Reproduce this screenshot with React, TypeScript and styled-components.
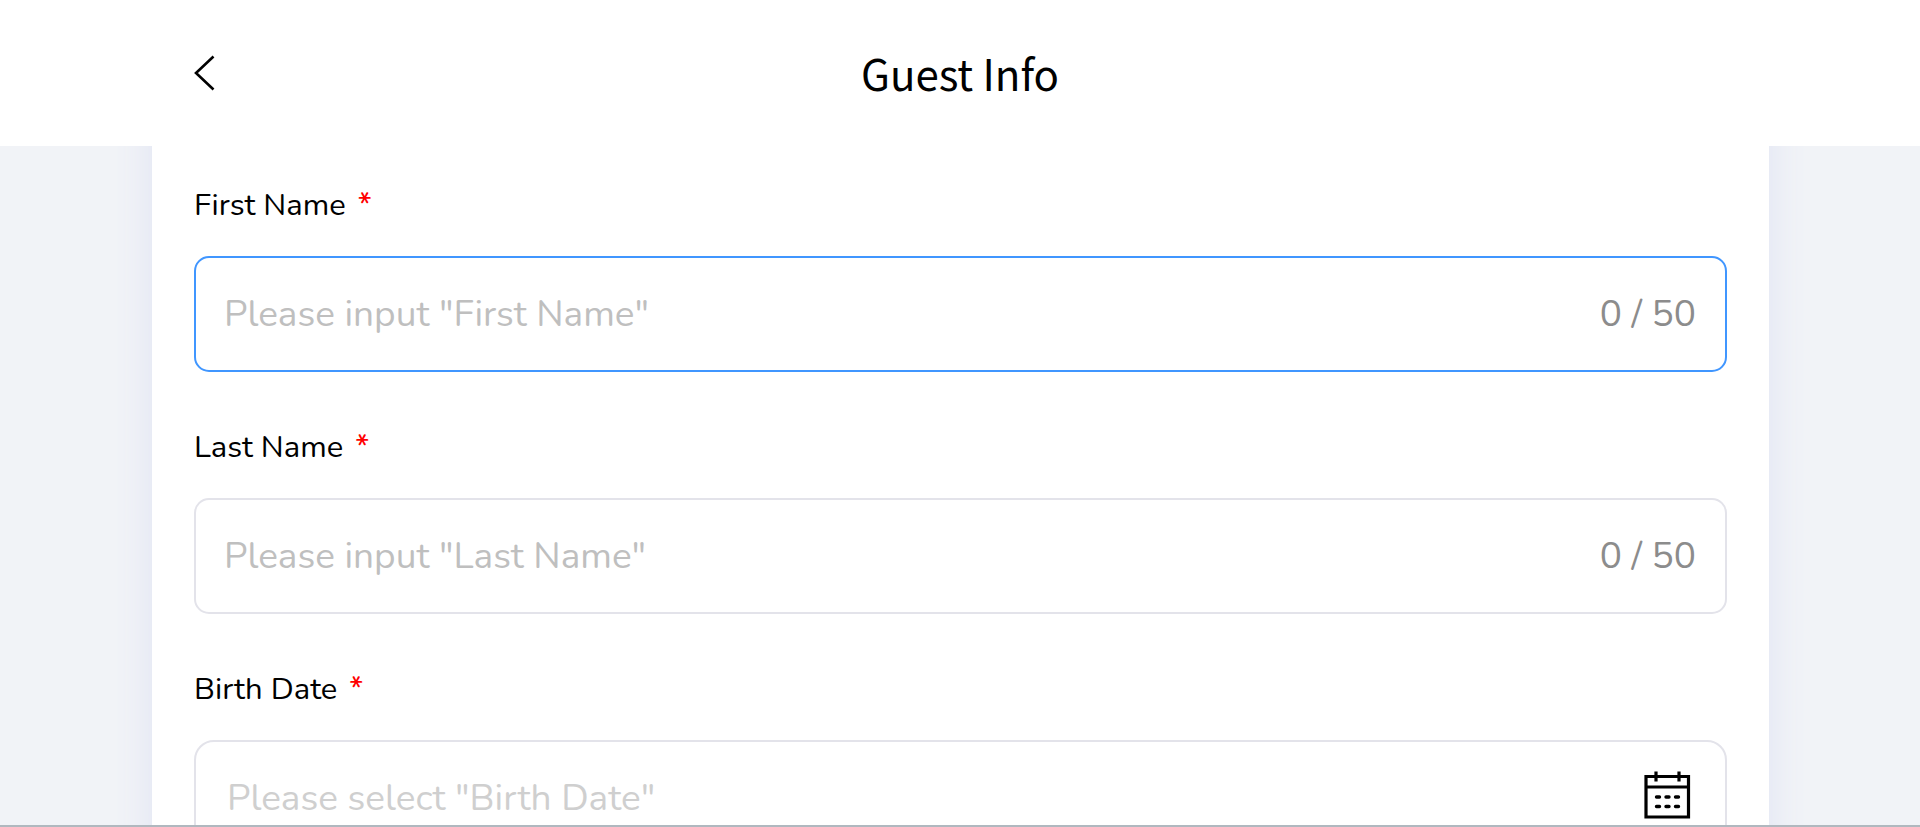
import React from "react";
import styled, { createGlobalStyle } from "styled-components";

const GlobalStyle = createGlobalStyle`
  *, *::before, *::after { box-sizing: border-box; }
  body { margin: 0; background: #f1f3f7; }
`;

const Page = styled.div`
  display: flex;
  flex-direction: column;
  height: 100vh;
  font-family: Nunito, Lato, "Noto Sans", sans-serif;
  font-weight: 400;
  color: #000;
  border-bottom: 2px solid #b0b8bf;
`;

const Header = styled.header`
  flex: none;
  display: grid;
  grid-template-columns: 1fr auto 1fr;
  align-items: center;
  height: 146px;
  padding: 0 193px;
  background: #fff;
`;

const BackButton = styled.button`
  justify-self: start;
  display: flex;
  padding: 0;
  border: 0;
  background: none;
  color: inherit;
  cursor: pointer;
`;

const Title = styled.h1`
  margin: 0;
  font-family: "Noto Sans SC", "Noto Sans CJK SC", sans-serif;
  font-size: 42px;
  line-height: 60px;
  font-weight: 400;
`;

const Content = styled.main`
  flex: 1;
  min-height: 0;
  overflow: hidden auto;
  scrollbar-width: none;
  padding: 0 151px 0 152px;
`;

const Card = styled.form`
  display: flex;
  flex-direction: column;
  gap: 53px;
  margin-top: -80px;
  padding: 117px 42px 54px;
  background: #fff;
  box-shadow: 0 0 36px #dfe3f3;
`;

const Field = styled.div`
  display: flex;
  flex-direction: column;
  gap: 28px;
`;

const Label = styled.label`
  font-size: 31px;
  line-height: 45px;
`;

const Required = styled.span`
  margin-left: 12px;
  font-weight: 500;
  color: #f00;
`;

const InputBox = styled.div<{ $active?: boolean; $rounded?: boolean }>`
  display: flex;
  align-items: center;
  height: 116px;
  padding: ${(p) => (p.$rounded ? "0 34px 0 31px" : "0 29px 0 28px")};
  border: 2px solid ${(p) => (p.$active ? "#4096ff" : "#e3e3ea")};
  border-radius: ${(p) => (p.$rounded ? 20 : 15)}px;
`;

const TextInput = styled.input<{ $pale?: boolean }>`
  flex: 1;
  min-width: 0;
  padding: 0;
  border: 0;
  outline: 0;
  background: none;
  font: inherit;
  font-size: 37px;
  line-height: 48px;
  color: inherit;

  &::placeholder {
    color: ${(p) => (p.$pale ? "#cfcfcf" : "#bfbfbf")};
    opacity: 1;
  }
`;

const Counter = styled.span`
  font-size: 37px;
  line-height: 48px;
  color: #8c8c8c;
`;

const PickerButton = styled.button`
  display: flex;
  padding: 0 0 6px;
  border: 0;
  background: none;
  color: inherit;
  cursor: pointer;
`;

const BackIcon = () => (
  <svg width="22" height="36" viewBox="0 0 22 36" fill="none" stroke="currentColor" strokeWidth="2.6" aria-hidden="true">
    <path d="M20.5 1.5 3 18l17.500 16.500" />
  </svg>
);

const CalendarIcon = () => (
  <svg width="48" height="48" viewBox="0 0 48 48" fill="none" stroke="currentColor" aria-hidden="true">
    <path d="M3 5.500h42.500v40.500H3zM3 16h42.500" strokeWidth="3.2" />
    <path d="M13 .5v10M36 .5v10" strokeWidth="3.2" />
    <path d="M13.500 26h3M23 26h3M32.500 26h3M13.500 35.500h3M23 35.500h3M32.500 35.500h3" strokeWidth="3.4" strokeLinecap="round" />
  </svg>
);

const MAX_LENGTH = 50;

function NameField({ id, label, active }: { id: string; label: string; active?: boolean }) {
  const [value, setValue] = React.useState("");
  return (
    <Field>
      <Label htmlFor={id}>
        {label}
        <Required>*</Required>
      </Label>
      <InputBox $active={active}>
        <TextInput
          id={id}
          type="text"
          required
          maxLength={MAX_LENGTH}
          placeholder={`Please input "${label}"`}
          value={value}
          onChange={(e) => setValue(e.target.value)}
        />
        <Counter>{`${value.length} / ${MAX_LENGTH}`}</Counter>
      </InputBox>
    </Field>
  );
}

export default function App() {
  return (
    <Page>
      <GlobalStyle />
      <Header>
        <BackButton type="button" aria-label="Back">
          <BackIcon />
        </BackButton>
        <Title>Guest Info</Title>
      </Header>
      <Content>
        <Card>
          <NameField id="first-name" label="First Name" active />
          <NameField id="last-name" label="Last Name" />
          <Field>
            <Label htmlFor="birth-date">
              Birth Date
              <Required>*</Required>
            </Label>
            <InputBox $rounded>
              <TextInput id="birth-date" type="text" readOnly $pale placeholder={'Please select "Birth Date"'} />
              <PickerButton type="button" aria-label="Open calendar">
                <CalendarIcon />
              </PickerButton>
            </InputBox>
          </Field>
        </Card>
      </Content>
    </Page>
  );
}
